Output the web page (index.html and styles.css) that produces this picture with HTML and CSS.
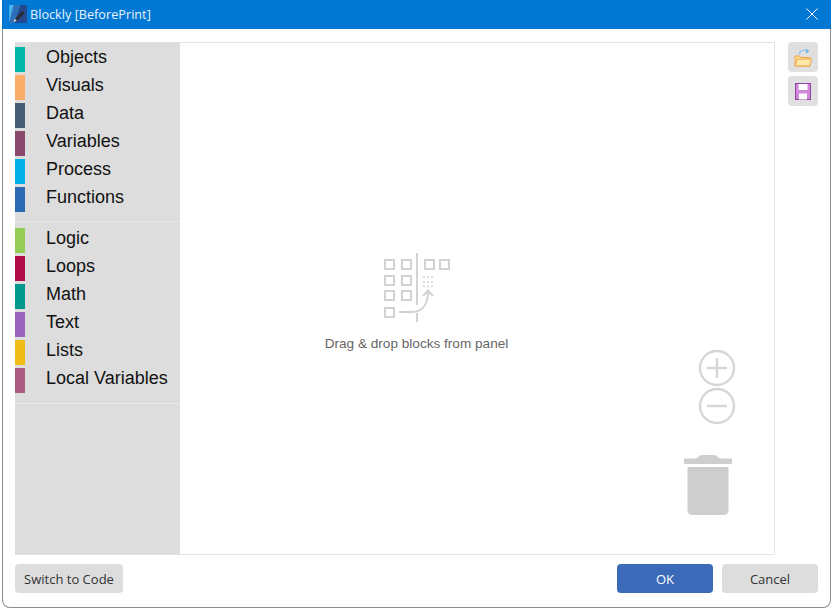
FILE: index.html
```html
<!DOCTYPE html>
<html lang="en">
<head>
<meta charset="utf-8">
<title>Blockly [BeforePrint]</title>
<link rel="stylesheet" href="styles.css">
</head>
<body>
<div class="window">
  <header class="titlebar">
    <svg class="app-icon" width="20" height="20" viewBox="0 0 18 18">
      <rect x="1" y="1" width="16" height="16" rx="1" fill="#2f6fb8"/>
      <path d="M1 17 L5 1 H1 Z" fill="#45b4ea"/>
      <path d="M6 17 L11 1 H17 V17 Z" fill="#24498f"/>
      <path d="M6 14 L13 6 L15 8 L8 15 Z" fill="#2b2b2b"/>
      <path d="M5 16 L6 13.5 L8 15 Z" fill="#e8e8e8"/>
    </svg>
    <span class="title">Blockly [BeforePrint]</span>
    <svg class="close" width="12" height="12" viewBox="0 0 12 12">
      <path d="M0.5 0.5 L11.5 11.5 M11.5 0.5 L0.5 11.5" stroke="#fff" stroke-width="1" fill="none"/>
    </svg>
  </header>
  <div class="content">
    <div class="main">
      <div class="workspace">
        <nav class="toolbox">
          <div class="group">
            <div class="item"><span class="swatch c1"></span>Objects</div>
            <div class="item"><span class="swatch c2"></span>Visuals</div>
            <div class="item"><span class="swatch c3"></span>Data</div>
            <div class="item"><span class="swatch c4"></span>Variables</div>
            <div class="item"><span class="swatch c5"></span>Process</div>
            <div class="item"><span class="swatch c6"></span>Functions</div>
          </div>
          <div class="group">
            <div class="item"><span class="swatch c7"></span>Logic</div>
            <div class="item"><span class="swatch c8"></span>Loops</div>
            <div class="item"><span class="swatch c9"></span>Math</div>
            <div class="item"><span class="swatch c10"></span>Text</div>
            <div class="item"><span class="swatch c11"></span>Lists</div>
            <div class="item"><span class="swatch c12"></span>Local Variables</div>
          </div>
        </nav>
        <div class="canvas">
          <div class="hint">
            <svg class="hint-icon" width="68" height="70" viewBox="0 0 68 70" fill="none" stroke="#d2d2d2" stroke-width="2">
              <rect x="1" y="7" width="9" height="9"/>
              <rect x="18" y="7" width="9" height="9"/>
              <rect x="1" y="23" width="9" height="9"/>
              <rect x="18" y="23" width="9" height="9"/>
              <rect x="1" y="38" width="9" height="9"/>
              <rect x="18" y="38" width="9" height="9"/>
              <rect x="1" y="55" width="9" height="9"/>
              <rect x="41" y="7" width="9" height="9"/>
              <rect x="56" y="7" width="9" height="9"/>
              <path d="M33 0 V52 M33 60 V69"/>
              <path d="M15 59 H28 C38 59 44 52 44 38"/>
              <path d="M39 43 L44 37.500 L49 43"/>
              <path d="M39 24 H41 M43 24 H45 M47 24 H49 M39 29 H41 M43 29 H45 M47 29 H49 M39 33.500 H41 M43 33.500 H45 M47 33.500 H49" stroke-width="1.500"/>
            </svg>
            <div class="hint-text">Drag &amp; drop blocks from panel</div>
          </div>
          <div class="controls">
            <svg class="zoom-btn" width="38" height="38" viewBox="0 0 38 38" fill="none" stroke="#d6d6d6" stroke-width="2.4">
              <circle cx="19" cy="19" r="17"/>
              <path d="M9 19 H29 M19 9 V29"/>
            </svg>
            <svg class="zoom-btn" width="38" height="38" viewBox="0 0 38 38" fill="none" stroke="#d6d6d6" stroke-width="2.4">
              <circle cx="19" cy="19" r="17"/>
              <path d="M9 19 H29"/>
            </svg>
            <svg class="trash" width="48" height="62" viewBox="0 0 48 62" fill="#cecece">
              <path d="M0 10 H48 V4.500 H36 L31 1 H17 L12 4.500 H0 Z"/>
              <path d="M3.500 13 H44.500 V56 Q44.500 61 39.500 61 H8.500 Q3.500 61 3.500 56 Z"/>
            </svg>
          </div>
        </div>
      </div>
      <aside class="side">
        <button class="tool" type="button" aria-label="Open">
          <svg width="18" height="19" viewBox="0 0 18 19">
            <path d="M5 6 C6 2 11 1 14 3" fill="none" stroke="#8cc0e6" stroke-width="1.300"/>
            <path d="M12 0.800 L15.500 3.200 L12 5.500 Z" fill="#6fb0e0"/>
            <path d="M1 18 V8 H6 L7 9.500 H16 V18 Z" fill="#fde08f" stroke="#eda650"/>
            <path d="M1 18 L3.500 11 H17.500 L16 18 Z" fill="#fde7a6" stroke="#eda650"/>
          </svg>
        </button>
        <button class="tool" type="button" aria-label="Save">
          <svg width="16" height="17" viewBox="0 0 16 17">
            <rect x="0.500" y="0.500" width="15" height="16" fill="#cf88d6" stroke="#8f429f"/>
            <rect x="3.500" y="1" width="9" height="6" fill="#fff"/>
            <rect x="4" y="10.500" width="8" height="6" fill="#fff"/>
          </svg>
        </button>
      </aside>
    </div>
    <footer class="footer">
      <button class="btn code" type="button">Switch to Code</button>
      <div class="actions">
        <button class="btn primary" type="button">OK</button>
        <button class="btn" type="button">Cancel</button>
      </div>
    </footer>
  </div>
</div>
</body>
</html>
```

FILE: styles.css
```css
* { box-sizing: border-box; }
html, body { margin: 0; height: 100%; background: #fff; }
body { padding: 0 5px 5px 2px; }
.window {
  height: 608px;
  display: flex;
  flex-direction: column;
  background: #fff;
  border: 1px solid #8c8c8c;
  border-top: 0;
  border-radius: 0 0 8px 8px;
}
.titlebar {
  height: 29px;
  flex: none;
  margin: 0 -1px;
  background: #0078d4;
  display: flex;
  align-items: center;
  padding: 0 13px 1px 6px;
  color: #fff;
}
.app-icon { flex: none; }
.title {
  margin-left: 2px;
  font: 12.700px/16px "Open Sans", sans-serif;
  color: #e9f3fb;
}
.close { margin-left: auto; }
.content {
  flex: 1;
  min-height: 0;
  display: flex;
  flex-direction: column;
  padding: 13px 12px 14px 12px;
}
.main { flex: 1; min-height: 0; display: flex; }
.workspace {
  flex: 1;
  display: flex;
  border: 1px solid #e2e2e2;
  border-left: 0;
  min-width: 0;
}
.toolbox {
  width: 165px;
  flex: none;
  background: #dddddd;
  padding-top: 4px;
}
.group {
  padding: 0 0 6px;
  border-bottom: 1px solid #e8e8e8;
}
.group + .group { padding: 6px 0 7px; }
.item {
  height: 28px;
  display: flex;
  align-items: flex-start;
  font: 18px/21px "Liberation Sans", sans-serif;
  color: #111;
}
.swatch { width: 10px; height: 25px; margin-right: 21px; flex: none; }
.c1 { background: #00b8a9; }
.c2 { background: #f9ad69; }
.c3 { background: #475d74; }
.c4 { background: #8a4a6e; }
.c5 { background: #00b0e6; }
.c6 { background: #2a6bb4; }
.c7 { background: #95cc55; }
.c8 { background: #b20c46; }
.c9 { background: #00998c; }
.c10 { background: #9b64bd; }
.c11 { background: #f1bc16; }
.c12 { background: #ac5a82; }
.canvas {
  flex: 1;
  min-width: 0;
  position: relative;
  display: flex;
  flex-direction: column;
  align-items: center;
  padding-top: 210px;
}
.hint { display: flex; flex-direction: column; align-items: center; margin-left: -121px; }
.hint-icon { display: block; margin-left: 4px; }
.hint-text {
  margin-top: 12px;
  font: 13.600px/17px "Liberation Sans", sans-serif;
  color: #666;
}
.controls {
  position: absolute;
  right: 42px;
  top: 306px;
  width: 48px;
  display: flex;
  flex-direction: column;
  align-items: center;
}
.controls svg { display: block; }
.controls .zoom-btn { position: relative; left: 9px; }
.controls .trash { margin-top: 29px; }
.side {
  width: 43px;
  flex: none;
  display: flex;
  flex-direction: column;
  align-items: flex-end;
  gap: 4px;
}
.tool {
  width: 30px;
  height: 30px;
  padding: 0;
  border: 0;
  border-radius: 4px;
  background: #e0e0e0;
  display: flex;
  align-items: center;
  justify-content: center;
}
.footer {
  flex: none;
  display: flex;
  justify-content: space-between;
  margin-top: 9px;
}
.actions { display: flex; gap: 9px; }
.btn {
  width: 96px;
  height: 29px;
  padding: 1px 0 0;
  border: 0;
  border-radius: 4px;
  background: #dddddd;
  color: #333;
  font: 13px/17px "Open Sans", sans-serif;
}
.btn.code { width: 108px; }
.btn.primary { background: #3b6bb8; color: #fff; }
```
